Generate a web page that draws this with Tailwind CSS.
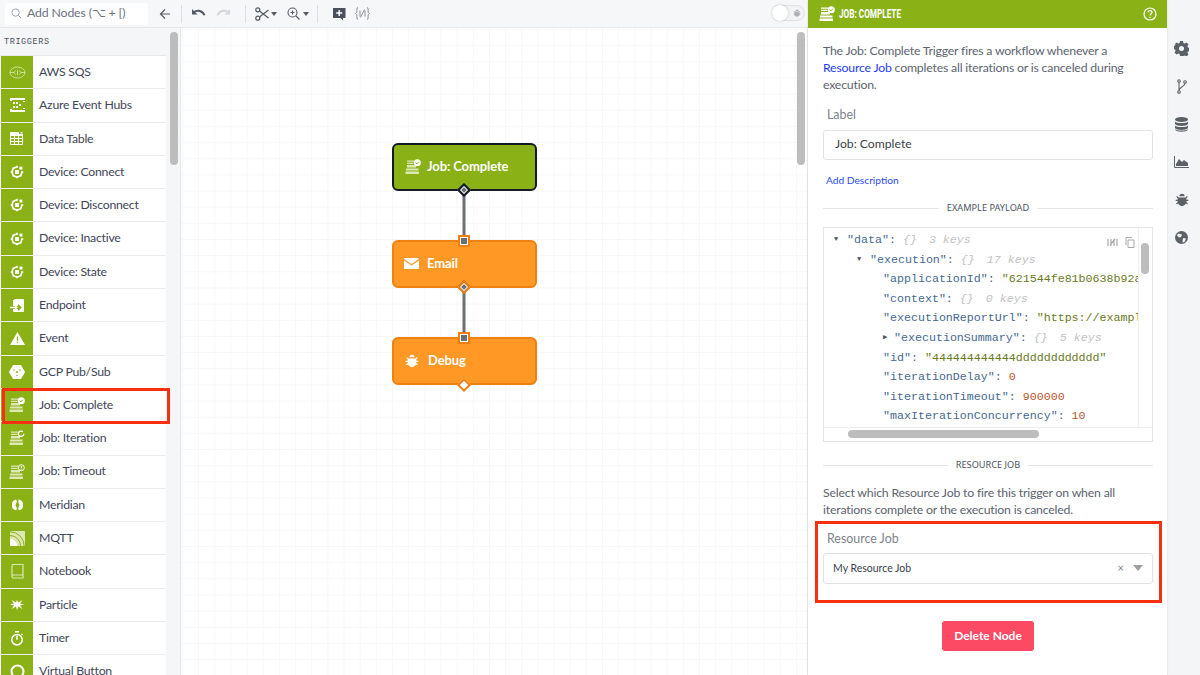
<!doctype html>
<html><head><meta charset="utf-8"><script src="https://cdn.jsdelivr.net/npm/@tailwindcss/browser@4"></script></head>
<body class="m-0 overflow-hidden">
<svg class="hidden" width="0" height="0">
<symbol id="stack" viewBox="0 0 16 16"><path d="M2 1.500h7.500v1.200H2zM2 3.800h6.500V5H2zM2 6h9v2.600H2z" fill="currentColor"/><rect x="1" y="9.500" width="12.500" height="2" fill="currentColor"/><rect x="0.500" y="12.500" width="13.500" height="2.500" rx=".5" fill="currentColor"/></symbol>
<symbol id="job" viewBox="0 0 16 16"><use href="#stack"/><circle cx="12.300" cy="3.700" r="3.500" fill="#fff"/><path d="M10.700 3.700l1.200 1.200 2-2.200" fill="none" stroke="#8ab116" stroke-width="1"/></symbol>
<symbol id="jobi" viewBox="0 0 16 16"><use href="#stack"/><path d="M14.800 3.700a2.700 2.700 0 1 1-1-2" fill="none" stroke="#fff" stroke-width="1.300"/></symbol>
<symbol id="jobt" viewBox="0 0 16 16"><use href="#stack"/><circle cx="12.300" cy="3.700" r="3" fill="none" stroke="#fff"/><path d="M12.300 2v2.200M12.300 4.800V5.600" stroke="#fff"/></symbol>
<symbol id="chip" viewBox="0 0 16 16"><path d="M8 2.500a5.500 5.500 0 1 0 5.500 5.500" fill="none" stroke="currentColor" stroke-width="2"/><path d="M8 .8v2.500M3 3l1.500 1.500M.8 8h2.500M3 13l1.500-1.500M8 12.700v2.500M13 13l-1.500-1.500M12.700 8h2.500" stroke="currentColor" stroke-width="1.800" fill="none"/><rect x="5.800" y="5.800" width="4.400" height="4.400" rx=".6" fill="currentColor"/><rect x="10.800" y="1.800" width="3.400" height="3.400" fill="currentColor"/></symbol>
<symbol id="bug" viewBox="0 0 16 16"><path d="M5 3.800a3 3 0 0 1 6 0zM4 5h8l1.600-1.600 1 1L13 6v1.800h2.200v1.400H13v1l1.800 1.900-1 1-1.300-1.300C12.300 13.200 10.200 15 8 15s-4.300-1.800-4.500-3.200l-1.300 1.300-1-1L3 10.200v-1H.8V7.800H3V6L1.400 4.400l1-1z" fill="currentColor"/></symbol>
</svg>
<div class="relative flex w-[1200px] h-[675px] overflow-hidden bg-white text-[#3f4658] [font-family:'Lato',sans-serif]">

<!-- left column -->
<div class="flex flex-col w-[808px] shrink-0">
  <!-- toolbar -->
  <div class="flex items-center h-[28px] shrink-0 bg-[#f6f7f8] border-b border-[#e8e9eb]">
    <div class="flex items-center w-[143px] h-[22px] ml-[5px] bg-white rounded-[3px] pl-[6px] gap-[5px] text-[12.300px] text-[#6b7280]">
      <svg width="11" height="11" viewBox="0 0 12 12" fill="none" stroke="#9aa0a8" stroke-width="1"><circle cx="5" cy="5" r="4"/><path d="M8 8l3 3"/></svg>
      <span class="tracking-[-.15px]">Add Nodes (⌥ + [)</span>
    </div>
    <svg class="ml-[11px]" width="12" height="12" viewBox="0 0 12 12" fill="none" stroke="#555b66" stroke-width="1.200"><path d="M11 6H1.500M6 1.500 1.500 6 6 10.500"/></svg>
    <div class="w-px h-[18px] bg-[#dcdee1] ml-[10px]"></div>
    <svg class="ml-[9px]" width="15" height="10" viewBox="0 0 15 10" fill="#555b66"><path d="M1 0v5.500h5.500L4.300 3.300C6.800 2 10.500 2.500 12.500 6.500L14.500 6C13 1.500 7.500-1 3 2z"/></svg>
    <svg class="ml-[10px]" width="15" height="10" viewBox="0 0 15 10" fill="#d5d7da"><path d="M14 0v5.500H8.500l2.200-2.200C8.200 2 4.500 2.500 2.500 6.500L.5 6C2 1.500 7.500-1 12 2z"/></svg>
    <div class="w-px h-[18px] bg-[#dcdee1] ml-[14px]"></div>
    <svg class="ml-[9px]" width="14" height="14" viewBox="0 0 14 14" fill="none" stroke="#555b66" stroke-width="1.200"><circle cx="2.800" cy="2.800" r="2"/><circle cx="2.800" cy="11.200" r="2"/><path d="M4.500 4 13.500 11M4.500 10 13.500 3"/></svg>
    <svg class="ml-[2px]" width="6" height="4" viewBox="0 0 6 4" fill="#555b66"><path d="M0 0h6L3 4z"/></svg>
    <svg class="ml-[10px]" width="13" height="13" viewBox="0 0 13 13" fill="none" stroke="#555b66" stroke-width="1.100"><circle cx="5.500" cy="5.500" r="4.500"/><path d="M9 9l3.500 3.500M3.500 5.500h4M5.500 3.500v4"/></svg>
    <svg class="ml-[3px]" width="6" height="4" viewBox="0 0 6 4" fill="#555b66"><path d="M0 0h6L3 4z"/></svg>
    <div class="w-px h-[18px] bg-[#dcdee1] ml-[8px]"></div>
    <svg class="ml-[14px]" width="14" height="14" viewBox="0 0 14 14"><path d="M1 1h12.500v10H11v2.500L8.500 11H1z" fill="#4a505c"/><path d="M7.200 3v6M4.200 6h6" stroke="#fff" stroke-width="1.400"/></svg>
    <svg class="ml-[9px]" width="15" height="13" viewBox="0 0 15 13" fill="none" stroke="#8b9097" stroke-width="1"><path d="M3 .5C1.500.5 2 3 1.800 5 1.700 6 .5 6.500.5 6.500s1.200.5 1.300 1.500C2 10 1.500 12.500 3 12.500M12 .5c1.500 0 1 2.500 1.200 4.500.1 1 1.300 1.500 1.300 1.500s-1.200.5-1.300 1.500c-.2 2 .3 4.500-1.200 4.500M5 3.500v6M10 3.500v6M9.500 2.500 5.500 10.500"/></svg>
    <div class="ml-auto mr-[3px] relative w-[33px] h-[16px] rounded-full bg-[#f2f3f4] border border-[#dfe1e3] mt-[-1px]">
      <div class="absolute left-[-1px] top-[-1px] size-[16px] rounded-full bg-white shadow-[0_0_2px_#0004]"></div>
      <svg class="absolute right-[3px] top-[3px] text-[#aab0b6]" width="8" height="8"><use href="#bug"/></svg>
    </div>
  </div>
  <div class="flex flex-1 min-h-0">
    <!-- sidebar -->
    <div class="relative flex w-[181px] shrink-0 bg-[#f5f6f7] border-r border-[#e6e7e9] overflow-hidden">
      <div class="w-[166px] shrink-0 flex flex-col">
        <div class="h-[28px] shrink-0 pl-[4px] pt-[10px] leading-[9px] text-[8.500px] tracking-[.6px] text-[#4c5361] [font-family:'Liberation_Mono',monospace] border-b border-[#e8e9eb]">TRIGGERS</div>
        <div class="flex flex-col text-[12.300px] tracking-[-.25px]">
          <div class="flex h-[33.300px] shrink-0 bg-white border-b border-[#ecedef]"><div class="w-[32px] ml-px bg-[#8ab116] flex items-center justify-center"><svg width="17" height="13" viewBox="0 0 17 13" fill="none" stroke="#d6e3a5" stroke-width=".9"><ellipse cx="8.500" cy="6.500" rx="7.500" ry="5.500"/><path d="M1 6.500h4M12 6.500h4M6.500 4.500 5 6.500l1.500 2M10.500 4.500l1.500 2-1.500 2M8.500 4v5"/></svg></div><span class="pl-[6px] self-center">AWS SQS</span></div>
          <div class="flex h-[33.300px] shrink-0 bg-white border-b border-[#ecedef]"><div class="w-[32px] ml-px bg-[#8ab116] flex items-center justify-center"><svg width="15" height="14" viewBox="0 0 15 14" fill="#fff"><path d="M0 0h15v2H2v1H0zM0 11h2v1h13v2H0zM13 3h2v1h-2zM13 10h2v1h-2z"/><rect x="3" y="4" width="2" height="2"/><rect x="6" y="4" width="2" height="2"/><rect x="3" y="8" width="2" height="2"/><rect x="6" y="8" width="2" height="2"/><rect x="9" y="6" width="2" height="2"/></svg></div><span class="pl-[6px] self-center">Azure Event Hubs</span></div>
          <div class="flex h-[33.300px] shrink-0 bg-white border-b border-[#ecedef]"><div class="w-[32px] ml-px bg-[#8ab116] flex items-center justify-center"><svg width="14" height="13" viewBox="0 0 14 13" fill="#fff"><path fill-rule="evenodd" d="M1 0h8v2h4v10a1 1 0 0 1-1 1H1a1 1 0 0 1-1-1V1a1 1 0 0 1 1-1zM1 4v2h3V4zm4 0v2h3V4zm4 0v2h3V4zM1 7v2h3V7zm4 0v2h3V7zm4 0v2h3V7zM1 10v2h3v-2zm4 0v2h3v-2zm4 0v2h3v-2z"/><rect x="10.500" width="2" height="1.500"/></svg></div><span class="pl-[6px] self-center">Data Table</span></div>
          <div class="flex h-[33.300px] shrink-0 bg-white border-b border-[#ecedef]"><div class="w-[32px] ml-px bg-[#8ab116] flex items-center justify-center text-white"><svg width="14" height="14"><use href="#chip"/></svg></div><span class="pl-[6px] self-center">Device: Connect</span></div>
          <div class="flex h-[33.300px] shrink-0 bg-white border-b border-[#ecedef]"><div class="w-[32px] ml-px bg-[#8ab116] flex items-center justify-center text-white"><svg width="14" height="14"><use href="#chip"/></svg></div><span class="pl-[6px] self-center">Device: Disconnect</span></div>
          <div class="flex h-[33.300px] shrink-0 bg-white border-b border-[#ecedef]"><div class="w-[32px] ml-px bg-[#8ab116] flex items-center justify-center text-white"><svg width="14" height="14"><use href="#chip"/></svg></div><span class="pl-[6px] self-center">Device: Inactive</span></div>
          <div class="flex h-[33.300px] shrink-0 bg-white border-b border-[#ecedef]"><div class="w-[32px] ml-px bg-[#8ab116] flex items-center justify-center text-white"><svg width="14" height="14"><use href="#chip"/></svg></div><span class="pl-[6px] self-center">Device: State</span></div>
          <div class="flex h-[33.300px] shrink-0 bg-white border-b border-[#ecedef]"><div class="w-[32px] ml-px bg-[#8ab116] flex items-center justify-center"><svg width="14" height="13" viewBox="0 0 14 13" fill="#fff"><path d="M4 1a1 1 0 0 1 1-1h8a1 1 0 0 1 1 1v11a1 1 0 0 1-1 1H4a1 1 0 0 1-1-1v-2h5v2l4-3.500L8 5v2H3V1z"/><path d="M0 7.800h5V6l3 2.500L5 11V9.200H0z"/></svg></div><span class="pl-[6px] self-center">Endpoint</span></div>
          <div class="flex h-[33.300px] shrink-0 bg-white border-b border-[#ecedef]"><div class="w-[32px] ml-px bg-[#8ab116] flex items-center justify-center"><svg width="15" height="13" viewBox="0 0 15 13"><path d="M7.500 0 15 13H0z" fill="#fff"/><path d="M7.500 4.500v4.200M7.500 9.800v1.400" stroke="#8ab116" stroke-width="1.300"/></svg></div><span class="pl-[6px] self-center">Event</span></div>
          <div class="flex h-[33.300px] shrink-0 bg-white border-b border-[#ecedef]"><div class="w-[32px] ml-px bg-[#8ab116] flex items-center justify-center"><svg width="16" height="14" viewBox="0 0 16 14"><path d="M4 0h8l4 7-4 7H4L0 7z" fill="#fff"/><g fill="#8ab116"><circle cx="8" cy="7" r="1"/><circle cx="5" cy="5" r=".7"/><circle cx="11" cy="5" r=".7"/><circle cx="8" cy="10.500" r=".7"/></g></svg></div><span class="pl-[6px] self-center">GCP Pub/Sub</span></div>
          <div class="flex h-[33.300px] shrink-0 bg-white border-b border-[#ecedef]"><div class="w-[32px] ml-px bg-[#8ab116] flex items-center justify-center text-[#dde8b5]"><svg width="16" height="16"><use href="#job"/></svg></div><span class="pl-[6px] self-center">Job: Complete</span></div>
          <div class="flex h-[33.300px] shrink-0 bg-white border-b border-[#ecedef]"><div class="w-[32px] ml-px bg-[#8ab116] flex items-center justify-center text-[#dde8b5]"><svg width="16" height="16"><use href="#jobi"/></svg></div><span class="pl-[6px] self-center">Job: Iteration</span></div>
          <div class="flex h-[33.300px] shrink-0 bg-white border-b border-[#ecedef]"><div class="w-[32px] ml-px bg-[#8ab116] flex items-center justify-center text-[#dde8b5]"><svg width="16" height="16"><use href="#jobt"/></svg></div><span class="pl-[6px] self-center">Job: Timeout</span></div>
          <div class="flex h-[33.300px] shrink-0 bg-white border-b border-[#ecedef]"><div class="w-[32px] ml-px bg-[#8ab116] flex items-center justify-center"><svg width="11" height="12" viewBox="0 0 11 12" fill="#fff"><path d="M4.300 .5a5.600 5.600 0 0 0 0 11l.5-2.300L3.500 6l1.300-3zM6.700 .5a5.600 5.600 0 0 1 0 11l-.5-2.300L7.500 6 6.200 3z"/></svg></div><span class="pl-[6px] self-center">Meridian</span></div>
          <div class="flex h-[33.300px] shrink-0 bg-white border-b border-[#ecedef]"><div class="w-[32px] ml-px bg-[#8ab116] flex items-center justify-center"><svg width="15" height="15" viewBox="0 0 15 15"><rect width="15" height="15" rx="1" fill="#dde8b5"/><path d="M0 4.500a10.500 10.500 0 0 1 10.500 10.500M0 .8A14.200 14.200 0 0 1 14.200 15" fill="none" stroke="#8ab116" stroke-width="1"/><path d="M0 8a7 7 0 0 1 7 7H0z" fill="#fff"/></svg></div><span class="pl-[6px] self-center">MQTT</span></div>
          <div class="flex h-[33.300px] shrink-0 bg-white border-b border-[#ecedef]"><div class="w-[32px] ml-px bg-[#8ab116] flex items-center justify-center"><svg width="13" height="15" viewBox="0 0 13 15" fill="none" stroke="#dde8b5" stroke-width="1.200"><path d="M1 12.500V2a1.500 1.500 0 0 1 1.500-1.500H12V11H2.500A1.500 1.500 0 0 0 1 12.500 1.500 1.500 0 0 0 2.500 14H12v-3"/></svg></div><span class="pl-[6px] self-center">Notebook</span></div>
          <div class="flex h-[33.300px] shrink-0 bg-white border-b border-[#ecedef]"><div class="w-[32px] ml-px bg-[#8ab116] flex items-center justify-center"><svg width="15" height="15" viewBox="0 0 15 15" fill="#fff"><path d="M7 3 8.500 5.500 12.500 3 10 6.500l4 1-4 1 2.500 3.500-4-2.500L7 13 6 9.500 1.500 12 4 8.500 0 7.500l4-1L1.500 3 6 5.500z"/></svg></div><span class="pl-[6px] self-center">Particle</span></div>
          <div class="flex h-[33.300px] shrink-0 bg-white border-b border-[#ecedef]"><div class="w-[32px] ml-px bg-[#8ab116] flex items-center justify-center"><svg width="14" height="15" viewBox="0 0 14 15" fill="none" stroke="#fff" stroke-width="1.500"><circle cx="7" cy="8.700" r="5.200"/><path d="M5 .8h4M7 4.500v4.200M11.500 3l1 1"/></svg></div><span class="pl-[6px] self-center">Timer</span></div>
          <div class="flex h-[33.300px] shrink-0 bg-white border-b border-[#ecedef]"><div class="w-[32px] ml-px bg-[#8ab116] flex items-center justify-center"><svg width="15" height="15" viewBox="0 0 15 15" fill="none" stroke="#fff" stroke-width="2"><circle cx="7.500" cy="7.500" r="6"/></svg></div><span class="pl-[6px] self-center">Virtual Button</span></div>
        </div>
      </div>
      <div class="absolute left-[170px] top-[4px] w-[8px] h-[133px] rounded-full bg-[#bdbdbd]"></div>
    </div>
    <!-- canvas -->
    <div class="relative flex-1 bg-white bg-[linear-gradient(#f7f7f8_1px,transparent_1px),linear-gradient(90deg,#f7f7f8_1px,transparent_1px)] bg-[size:16.170px_16.170px] bg-[position:1px_1px] border-r border-[#ececee]">
      <div class="absolute left-[616px] top-[4px] w-[8px] h-[133px] rounded-full bg-[#bdbdbd]"></div>
    </div>
  </div>
</div>

<!-- right panel -->
<div class="w-[359px] shrink-0 flex flex-col bg-white shadow-[0_0_2px_#0002] z-10">
  <div class="flex items-center h-[28px] shrink-0 bg-[#8ab116] text-white pl-[11px] pr-[10px]">
    <svg width="16" height="16"><use href="#job"/></svg>
    <span class="ml-[4px] text-[13px] font-bold origin-left scale-x-[.63] whitespace-nowrap [font-family:'Roboto',sans-serif]">JOB: COMPLETE</span>
    <svg class="ml-auto" width="14" height="14" viewBox="0 0 14 14" fill="none" stroke="#fff" stroke-width="1.200"><circle cx="7" cy="7" r="6"/><path d="M5 5.500C5 3 9 3 9 5.500 9 7 7 7 7 8.500M7 9.800v1.300"/></svg>
  </div>
  <div class="flex flex-col pl-[15px] pr-[14px] text-[12.300px] tracking-[-.2px]">
    <p class="mt-[14px] leading-[17px] text-[#5d6470]">The Job: Complete Trigger fires a workflow whenever a <span class="text-[#1f3df5]">Resource Job</span> completes all iterations or is canceled during execution.</p>
    <div class="mt-[14px] pl-[4px] text-[12.400px] tracking-normal leading-[16px] text-[#7e838c]">Label</div>
    <div class="mt-[7px] flex items-center h-[30px] pl-[11px] border border-[#dfe1e4] rounded-[3px] text-[12.200px] tracking-normal text-[#3a3f4a] pb-[1px]">Job: Complete</div>
    <div class="mt-[13px] pl-[3px] text-[10.200px] tracking-normal leading-[14px] text-[#2a4df5]">Add Description</div>
    <div class="mt-[14px] flex items-center gap-[8px] text-[9.200px] leading-[14px] text-[#4c5361] [font-family:'Noto_Sans',sans-serif] tracking-normal"><div class="h-px flex-1 bg-[#e6e7e9]"></div>EXAMPLE PAYLOAD<div class="h-px flex-1 bg-[#e6e7e9]"></div></div>
    <!-- payload -->
    <div class="relative mt-[12px] h-[215px] border border-[#e3e4e6] overflow-hidden pt-[2px] text-[11.650px] tracking-normal leading-[19.600px] whitespace-nowrap [font-family:'Liberation_Mono',monospace] text-[#46688f] bg-white">
      <div class="flex items-center pl-[10px]"><span class="text-[7px] w-[13px] text-[#4c5361]">▼</span>"data": <i class="ml-[7px] text-[#c2c2c2]">{}</i><i class="ml-[12px] text-[#c2c2c2]">3 keys</i></div>
      <div class="flex items-center pl-[33px]"><span class="text-[7px] w-[13px] text-[#4c5361]">▼</span>"execution": <i class="ml-[7px] text-[#c2c2c2]">{}</i><i class="ml-[12px] text-[#c2c2c2]">17 keys</i></div>
      <div class="pl-[59px]">"applicationId": <span class="text-[#6a7a1e]">"621544fe81b0638b92a</span></div>
      <div class="pl-[59px] flex items-center">"context": <i class="ml-[7px] text-[#c2c2c2]">{}</i><i class="ml-[12px] text-[#c2c2c2]">0 keys</i></div>
      <div class="pl-[59px]">"executionReportUrl": <span class="text-[#6a7a1e]">"https://exampl</span></div>
      <div class="flex items-center pl-[59px]"><span class="text-[7px] w-[11px] text-[#4c5361]">▶</span>"executionSummary": <i class="ml-[7px] text-[#c2c2c2]">{}</i><i class="ml-[12px] text-[#c2c2c2]">5 keys</i></div>
      <div class="pl-[59px]">"id": <span class="text-[#6a7a1e]">"444444444444dddddddddddd"</span></div>
      <div class="pl-[59px]">"iterationDelay": <span class="text-[#b5562b]">0</span></div>
      <div class="pl-[59px]">"iterationTimeout": <span class="text-[#b5562b]">900000</span></div>
      <div class="pl-[59px]">"maxIterationConcurrency": <span class="text-[#b5562b]">10</span></div>
      <div class="absolute right-0 top-0 bottom-0 w-[14px] bg-white border-l border-[#eceded]"></div>
      <div class="absolute left-0 right-0 bottom-0 h-[14px] bg-white border-t border-[#eceded]"></div>
      <div class="absolute right-[3px] top-[15px] w-[8px] h-[31px] rounded-full bg-[#bdbdbd]"></div>
      <div class="absolute left-[24px] bottom-[3px] w-[191px] h-[8px] rounded-full bg-[#bdbdbd]"></div>
      <svg class="absolute left-[283px] top-[10px]" width="11" height="9" viewBox="0 0 11 9" fill="none" stroke="#a8a8a8" stroke-width="1.200"><path d="M1 1v7M4 1v7M7 1v7M10 1v7M3 7l5-6"/></svg>
      <svg class="absolute left-[301px] top-[9px]" width="10" height="11" viewBox="0 0 10 11" fill="none" stroke="#a8a8a8"><path d="M3 3h6v7.500H3zM1 8V.5h6"/></svg>
    </div>
    <div class="mt-[16px] flex items-center gap-[8px] text-[9.200px] leading-[14px] text-[#4c5361] [font-family:'Noto_Sans',sans-serif] tracking-normal"><div class="h-px flex-1 bg-[#e6e7e9]"></div>RESOURCE JOB<div class="h-px flex-1 bg-[#e6e7e9]"></div></div>
    <p class="mt-[12px] leading-[17px] text-[#5d6470]">Select which Resource Job to fire this trigger on when all iterations complete or the execution is canceled.</p>
    <div class="mt-[13px] pl-[4px] text-[12.400px] tracking-normal leading-[16px] text-[#7e838c]">Resource Job</div>
    <div class="mt-[6px] flex items-center h-[31px] pl-[9px] pr-[9px] border border-[#dfe1e4] rounded-[3px] text-[10.500px] tracking-normal text-[#3a3f4a]">My Resource Job<span class="ml-auto text-[11px] text-[#7e838c]">×</span><svg class="ml-[9px] mb-[2px]" width="10" height="6" viewBox="0 0 10 6" fill="#9a9ea5"><path d="M0 0h10L5 6z"/></svg></div>
    <div class="mt-[37px] self-center flex items-center justify-center w-[92px] h-[30px] rounded-[3px] bg-[#fd4a64] text-white text-[12px] tracking-normal font-bold">Delete Node</div>
  </div>
</div>

<!-- rail -->
<div class="flex-1 flex flex-col items-center bg-[#f4f5f7] pt-[30px] pr-[4px]">
  <div class="h-[37.700px] flex items-center"><svg width="15" height="15" viewBox="0 0 15 15"><path fill="#5c6168" fill-rule="evenodd" d="M6 0h3l.4 2 1.400.6L12.500 1.500l2 2-1.100 1.700.6 1.400 2 .4v3l-2 .4-.6 1.400 1.100 1.700-2 2-1.700-1.100-1.400.6L9 15H6l-.4-2-1.400-.6-1.700 1.100-2-2 1.100-1.700-.6-1.400-2-.4v-3l2-.4.6-1.400L.5 3.500l2-2 1.700 1.100 1.400-.6zM7.500 5a2.500 2.500 0 1 0 0 5 2.500 2.500 0 0 0 0-5z"/></svg></div>
  <div class="h-[37.700px] flex items-center"><svg width="10" height="15" viewBox="0 0 10 15" fill="none" stroke="#5c6168" stroke-width="1.100"><circle cx="2" cy="2" r="1.300"/><circle cx="8" cy="3" r="1.300"/><circle cx="2" cy="13" r="1.300"/><path d="M2 3.300v8.400M8 4.300C8 8 2 7.500 2 11.700"/></svg></div>
  <div class="h-[37.700px] flex items-center"><svg width="13" height="15" viewBox="0 0 13 15" fill="#5c6168"><ellipse cx="6.500" cy="2.500" rx="6.500" ry="2.500"/><path d="M0 4.500c1 2 12 2 13 0v2.500c-1 2.500-12 2.500-13 0zM0 8.500c1 2 12 2 13 0V11c-1 2.500-12 2.500-13 0zM0 12c1 2 12 2 13 0v.5c-1 3-12 3-13 0z"/></svg></div>
  <div class="h-[37.700px] flex items-center"><svg width="15" height="12" viewBox="0 0 15 12"><path d="M.5 0v11.500H15" fill="none" stroke="#5c6168"/><path d="M2 10V8l3-5 3 3 2-2 4 3v3z" fill="#5c6168"/></svg></div>
  <div class="h-[37.700px] flex items-center text-[#5c6168]"><svg width="14" height="14"><use href="#bug"/></svg></div>
  <div class="h-[37.700px] flex items-center"><svg width="13" height="13" viewBox="0 0 13 13"><circle cx="6.500" cy="6.500" r="6.500" fill="#5c6168"/><path d="M3 2.500 7 3.500 6 6l-2 .5-2-2zM8 7l3 .5-1.500 3.500-2 .5z" fill="#f4f5f7"/></svg></div>
</div>

<!-- diagram connectors -->
<div class="absolute z-20 left-[463px] top-[190px] w-[2px] h-[50px] bg-[#6b6f76] shadow-[0_0_0_1px_#b5b7ba]"></div>
<div class="absolute z-20 left-[463px] top-[287px] w-[2px] h-[50px] bg-[#6b6f76] shadow-[0_0_0_1px_#b5b7ba]"></div>

<!-- diagram nodes -->
<div class="absolute z-20 left-[392px] top-[143px] flex items-center w-[145px] h-[48px] rounded-[6px] bg-[#8ab116] border-2 border-[#131a23] text-white text-[13px] font-bold pl-[11px] pb-[1px] gap-[6px] tracking-[-.1px]"><svg class="text-[#dde8b5]" width="16" height="16"><use href="#job"/></svg>Job: Complete</div>
<div class="absolute z-20 left-[392px] top-[240px] flex items-center w-[145px] h-[48px] rounded-[6px] bg-[#ff9824] border-2 border-[#ef7f10] text-white text-[13px] font-bold pl-[10px] pb-[1px] gap-[8px] tracking-[-.1px]"><svg width="15" height="11" viewBox="0 0 15 11" fill="#fff"><path d="M1 0h13a1 1 0 0 1 1 1L7.500 6 0 1a1 1 0 0 1 1-1zM0 2.500 7.500 7.500 15 2.500V10a1 1 0 0 1-1 1H1a1 1 0 0 1-1-1z"/></svg>Email</div>
<div class="absolute z-20 left-[392px] top-[337px] flex items-center w-[145px] h-[48px] rounded-[6px] bg-[#ff9824] border-2 border-[#ef7f10] text-white text-[13px] font-bold pl-[11px] pb-[1px] gap-[9px] tracking-[-.1px]"><svg width="14" height="14"><use href="#bug"/></svg>Debug</div>

<!-- ports -->
<div class="absolute z-20 left-[459px] top-[185px] size-[10px] rotate-45 bg-[#6b6f76] border-2 border-[#131a23] shadow-[inset_0_0_0_1px_#fff]"></div>
<div class="absolute z-20 left-[459px] top-[282px] size-[10px] rotate-45 bg-[#6b6f76] border-2 border-[#ef7f10] shadow-[inset_0_0_0_1px_#fff]"></div>
<div class="absolute z-20 left-[459px] top-[380px] size-[10px] rotate-45 bg-white border-2 border-[#ef7f10]"></div>
<div class="absolute z-20 left-[458px] top-[235px] size-[12px] bg-[#6b6f76] border-2 border-[#ef7f10] shadow-[inset_0_0_0_1px_#fff]"></div>
<div class="absolute z-20 left-[458px] top-[332px] size-[12px] bg-[#6b6f76] border-2 border-[#ef7f10] shadow-[inset_0_0_0_1px_#fff]"></div>

<!-- annotations -->
<div class="absolute z-30 left-[2px] top-[388px] w-[168px] h-[36px] border-[3px] border-[#f7310f]"></div>
<div class="absolute z-30 left-[815px] top-[521px] w-[347px] h-[82px] border-[3px] border-[#f7310f]"></div>
</div>
</body></html>
